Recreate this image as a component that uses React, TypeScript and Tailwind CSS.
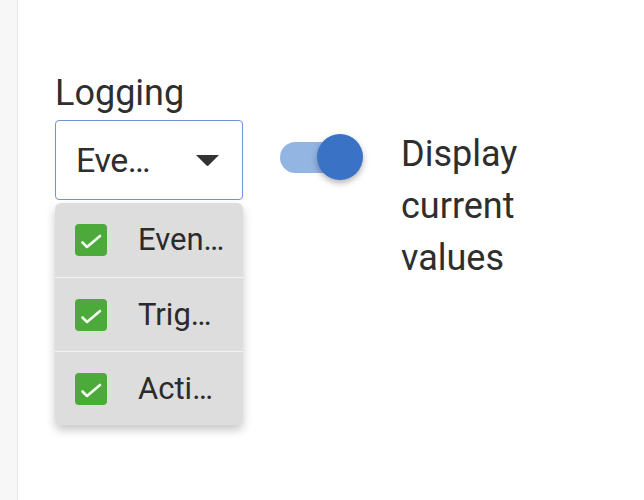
import React from "react";

const items = ["Even…", "Trig…", "Acti…"];

function Check() {
  return (
    <div className="h-[32px] w-[32px] rounded-[4px] bg-[#4caa3a]">
      <svg width="32" height="32" viewBox="0 0 32 32" fill="none">
        <path d="M7.5 18.5 L12 23 L25 12" stroke="#f4fbf2" strokeWidth="2.6" strokeLinecap="round" strokeLinejoin="round" />
      </svg>
    </div>
  );
}

export default function App() {
  return (
    <div
      className="flex h-[500px] w-[644px] bg-white text-[#2e2e2e]"
      style={{ fontFamily: "Roboto, 'Liberation Sans', sans-serif" }}
    >
      {/* side strip */}
      <div className="h-full w-[18px] border-r border-[#e7e7e7] bg-[#f7f7f7]" />

      <div className="flex-1 pl-[37px] pt-[68px]">
        <div className="h-[52px] text-[36px] leading-[51px]">Logging</div>

        <div className="flex items-start">
          {/* select */}
          <div className="relative w-[188px]">
            <div className="flex h-[80px] items-center justify-between rounded-[4px] border-[1.5px] border-[#6f93d6] bg-white pl-[20px] pr-[22px]">
              <span className="text-[34px] leading-[51px] tracking-[-0.5px]">Eve…</span>
              <svg width="25" height="12" viewBox="0 0 25 12">
                <path d="M1 1 L24 1 L13.5 11.5 Q12.5 12.3 11.5 11.5 Z" fill="#333333" />
              </svg>
            </div>

            {/* open menu */}
            <div className="absolute left-0 top-[83px] z-10 w-full overflow-hidden rounded-[6px] bg-[#dddddd] shadow-[0_5px_10px_rgba(0,0,0,0.22)]">
              {items.map((label, i) => (
                <div
                  key={label}
                  className={`flex h-[74px] items-center pl-[20px] ${i > 0 ? "border-t border-[#f2f2f2]" : ""}`}
                >
                  <Check />
                  <span className="ml-[31px] text-[31px] leading-[40px] text-[#2b2b2b]">{label}</span>
                </div>
              ))}
            </div>
          </div>

          {/* switch */}
          <div className="relative ml-[37px] mt-[22px] h-[31px] w-[72px] rounded-full bg-[#93b5e2]">
            <div className="absolute left-[37px] top-[-8px] h-[46px] w-[46px] rounded-full bg-[#3a73c6] shadow-[0_3px_6px_rgba(0,0,0,0.3)]" />
          </div>

          <div className="ml-[49px] mt-[8px] w-[160px] text-[36px] leading-[52px]">
            Display current values
          </div>
        </div>
      </div>
    </div>
  );
}
